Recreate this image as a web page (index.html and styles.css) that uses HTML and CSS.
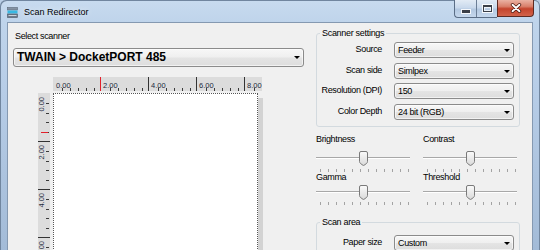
FILE: index.html
```html
<!DOCTYPE html>
<html lang="en">
<head>
  <meta charset="UTF-8">
  <title>Scan Redirector</title>
  <link rel="stylesheet" href="styles.css">
</head>
<body>
  <div class="window">
    <!-- title bar -->
    <div class="titlebar">
      <svg class="app-icon" width="11" height="11" viewBox="0 0 11 11">
        <rect x="0.5" y="0.5" width="10" height="2.5" fill="#8593a3" stroke="#5b6878" stroke-width="0.6"/>
        <rect x="0.5" y="3.5" width="10" height="3" fill="#38b8e2"/>
        <rect x="0.5" y="7" width="10" height="3.5" fill="#6c7a8a" stroke="#4b5867" stroke-width="0.6"/>
        <rect x="1.5" y="8" width="8" height="1" fill="#c9d2dc"/>
      </svg>
      <span class="title">Scan Redirector</span>
      <div class="caption-btns">
        <div class="cap-group">
          <div class="cap-btn min"><span class="min-glyph"></span></div>
          <div class="cap-btn max"><span class="max-glyph"></span></div>
        </div>
        <div class="cap-btn close">
          <svg width="12" height="10" viewBox="0 0 12 10">
            <path d="M2.5 1.8 L9.5 8.2 M9.5 1.8 L2.5 8.2" stroke="#4a1810" stroke-width="3.4" stroke-linecap="round"/>
            <path d="M2.5 1.8 L9.5 8.2 M9.5 1.8 L2.5 8.2" stroke="#ffffff" stroke-width="1.9" stroke-linecap="round"/>
          </svg>
        </div>
      </div>
    </div>

    <!-- client area -->
    <div class="client">
      <div class="left-col">
        <div class="field-label">Select scanner</div>
        <div class="combo combo-big">TWAIN &gt; DocketPORT 485<span class="arrow"></span></div>

        <div class="preview">
          <div class="ruler-top">
            <div class="seg first"><span>0.00</span></div>
            <div class="seg cursor"><span>2.00</span></div>
            <div class="seg"><span>4.00</span></div>
            <div class="seg"><span>6.00</span></div>
            <div class="seg last"><span>8.00</span></div>
          </div>
          <div class="preview-body">
            <div class="ruler-left">
              <div class="vseg first"><span>0.00</span></div>
              <div class="vseg"><span>2.00</span></div>
              <div class="vseg"><span>4.00</span></div>
              <div class="vseg"><span>6.00</span></div>
              <div class="cursor-mark"></div>
            </div>
            <div class="page"></div>
          </div>
        </div>
      </div>

      <div class="right-col">
        <fieldset class="group">
          <legend>Scanner settings</legend>
          <div class="form-grid">
            <label>Source</label>
            <div class="combo">Feeder<span class="arrow"></span></div>
            <label>Scan side</label>
            <div class="combo">Simlpex<span class="arrow"></span></div>
            <label>Resolution (DPI)</label>
            <div class="combo">150<span class="arrow"></span></div>
            <label>Color Depth</label>
            <div class="combo">24 bit (RGB)<span class="arrow"></span></div>
          </div>
        </fieldset>

        <div class="sliders">
          <div class="slider">
            <div class="slider-label">Brightness</div>
            <div class="track"><svg class="thumb" width="9" height="15" viewBox="0 0 9 15"><path d="M0.5 2 Q0.5 0.5 2 0.5 H7 Q8.5 0.5 8.5 2 V10.5 Q8.5 11.5 7.5 12.5 L5 14.3 Q4.5 14.6 4 14.3 L1.5 12.5 Q0.5 11.5 0.5 10.5 Z" fill="url(#tg)" stroke="#7a7a7a"/><defs><linearGradient id="tg" x1="0" y1="0" x2="0" y2="1"><stop offset="0" stop-color="#fbfbfb"/><stop offset="1" stop-color="#d9d9d9"/></linearGradient></defs></svg></div>
            <div class="ticks"></div>
          </div>
          <div class="slider">
            <div class="slider-label">Contrast</div>
            <div class="track"><svg class="thumb" width="9" height="15" viewBox="0 0 9 15"><path d="M0.5 2 Q0.5 0.5 2 0.5 H7 Q8.5 0.5 8.5 2 V10.5 Q8.5 11.5 7.5 12.5 L5 14.3 Q4.5 14.6 4 14.3 L1.5 12.5 Q0.5 11.5 0.5 10.5 Z" fill="url(#tg)" stroke="#7a7a7a"/></svg></div>
            <div class="ticks"></div>
          </div>
          <div class="slider second">
            <div class="slider-label">Gamma</div>
            <div class="track"><svg class="thumb" width="9" height="15" viewBox="0 0 9 15"><path d="M0.5 2 Q0.5 0.5 2 0.5 H7 Q8.5 0.5 8.5 2 V10.5 Q8.5 11.5 7.5 12.5 L5 14.3 Q4.5 14.6 4 14.3 L1.5 12.5 Q0.5 11.5 0.5 10.5 Z" fill="url(#tg)" stroke="#7a7a7a"/></svg></div>
            <div class="ticks"></div>
          </div>
          <div class="slider second">
            <div class="slider-label">Threshold</div>
            <div class="track"><svg class="thumb" width="9" height="15" viewBox="0 0 9 15"><path d="M0.5 2 Q0.5 0.5 2 0.5 H7 Q8.5 0.5 8.5 2 V10.5 Q8.5 11.5 7.5 12.5 L5 14.3 Q4.5 14.6 4 14.3 L1.5 12.5 Q0.5 11.5 0.5 10.5 Z" fill="url(#tg)" stroke="#7a7a7a"/></svg></div>
            <div class="ticks"></div>
          </div>
        </div>

        <fieldset class="group scan-area">
          <legend>Scan area</legend>
          <div class="form-grid">
            <label>Paper size</label>
            <div class="combo">Custom<span class="arrow"></span></div>
          </div>
        </fieldset>
      </div>
    </div>
  </div>
</body>
</html>
```

FILE: styles.css
```css
* {
  box-sizing: border-box;
}

body {
  margin: 0;
  font-family: "Liberation Sans", Arial, sans-serif;
  font-size: 9px;
  color: #000;
  background: #b9cee6;
}

/* window frame */
.window {
  width: 540px;
  height: 250px;
  overflow: hidden;
  display: flex;
  flex-direction: column;
  padding: 0 7px;
  border-radius: 6px 6px 0 0;
  background: linear-gradient(to bottom, #c8dbef 0px, #bfd4eb 22px, #b7cde7 90px, #a3bbd7 250px);
  box-shadow: inset 1px 1px 0 #71869f, inset -1px 0 0 #71869f;
}

.titlebar {
  height: 22px;
  flex: none;
  display: flex;
  align-items: flex-start;
}

.app-icon {
  margin-top: 7px;
}

.title {
  margin-left: 6px;
  margin-top: 6.5px;
  line-height: 11px;
  font-size: 9px;
  color: #000;
  text-shadow: 0 0 6px rgba(255, 255, 255, 0.9);
}

.caption-btns {
  margin-left: auto;
  margin-right: -1px;
  display: flex;
}

.cap-group {
  display: flex;
  border: 1px solid #5a6d85;
  border-top: none;
  border-right: none;
  border-radius: 0 0 0 4px;
  overflow: hidden;
  background: linear-gradient(to bottom, #e2ebf5 0%, #c9d9ec 45%, #b3c8e1 55%, #c6d8ed 100%);
}

.cap-btn {
  height: 17px;
  display: flex;
  align-items: center;
  justify-content: center;
}

.cap-btn.min {
  width: 22px;
  border-right: 1px solid #6b7e96;
}

.cap-btn.max {
  width: 20px;
}

.min-glyph {
  width: 8px;
  height: 3px;
  margin-top: 5px;
  background: #3a3f48;
  box-shadow: 0 0 0 1px rgba(255, 255, 255, 0.85);
}

.max-glyph {
  width: 9px;
  height: 7px;
  border: 1px solid #3a3f48;
  border-top-width: 2px;
  box-shadow: 0 0 0 1px rgba(255, 255, 255, 0.85), inset 0 0 0 1px rgba(255, 255, 255, 0.7);
}

.cap-btn.close {
  width: 37px;
  border: 1px solid #5e2a22;
  border-top: none;
  border-radius: 0 0 4px 0;
  background: linear-gradient(to bottom, #eab2a3 0%, #d9806b 40%, #c4442d 55%, #d2634a 100%);
}

/* client area */
.client {
  flex: 1;
  min-height: 0;
  display: flex;
  background: #f0f0f0;
  border: 1px solid #8599b1;
  border-bottom: none;
}

.left-col {
  width: 296px;
  flex: none;
  padding: 8px 0 0 5px;
}

.field-label {
  margin-left: 2px;
  line-height: 11px;
  letter-spacing: -0.35px;
}

.combo {
  position: relative;
  height: 16px;
  line-height: 14px;
  padding-left: 3px;
  border: 1px solid #8b8b8b;
  border-radius: 3px;
  letter-spacing: -0.35px;
  background: linear-gradient(to bottom, #f7f7f7 0%, #efefef 48%, #e4e4e4 52%, #dddddd 100%);
  box-shadow: inset 0 0 0 1px rgba(255, 255, 255, 0.6);
}

.combo .arrow {
  position: absolute;
  right: 3px;
  top: 6px;
  width: 0;
  height: 0;
  border-left: 3px solid transparent;
  border-right: 3px solid transparent;
  border-top: 3px solid #000;
}

.combo-big {
  margin-top: 6px;
  width: 291px;
  height: 19px;
  line-height: 17px;
  padding-left: 3px;
  font-size: 12px;
  font-weight: bold;
  letter-spacing: 0;
}

.combo-big .arrow {
  top: 7px;
}

/* preview with rulers */
.preview {
  margin-top: 10px;
  margin-left: 25px;
}

.ruler-top {
  margin-left: 15px;
  width: 209px;
  height: 14px;
  margin-bottom: 2px;
  display: flex;
  background-color: #dcdcdc;
}

.seg {
  width: 48px;
  flex: none;
  border-left: 1px solid #333;
  background-image: repeating-linear-gradient(to right, #3a3a3a 0 1px, transparent 1px 8px);
  background-repeat: no-repeat;
  background-position: 9px 100%;
  background-size: 33px 3px;
}

.seg.first {
  width: 47px;
  border-left: none;
}

.seg.cursor {
  border-left-color: #e3202b;
}

.seg.last {
  flex: 1;
  width: auto;
}

.seg span {
  display: block;
  margin-top: 4px;
  padding-left: 2px;
  font-size: 7.5px;
  line-height: 9px;
  color: #1c2a3c;
}

.seg.first span {
  padding-left: 3px;
}

.preview-body {
  display: flex;
  height: 200px;
}

.ruler-left {
  position: relative;
  width: 12px;
  flex: none;
  background-color: #dcdcdc;
}

.vseg {
  height: 48px;
  border-top: 1px solid #333;
  background-image: repeating-linear-gradient(to bottom, #3a3a3a 0 1px, transparent 1px 9.6px);
  background-repeat: no-repeat;
  background-position: right 1px top 8.6px;
  background-size: 3px 38.4px;
}

.vseg.first {
  border-top-color: transparent;
}

.vseg span {
  display: block;
  margin-top: 3px;
  width: 8px;
  writing-mode: vertical-rl;
  transform: rotate(180deg);
  font-size: 7.5px;
  line-height: 8px;
  color: #1c2a3c;
}

.cursor-mark {
  position: absolute;
  left: 3px;
  top: 39px;
  width: 7px;
  height: 1px;
  background: #e3202b;
}

.page {
  margin-left: 3px;
  width: 205px;
  height: 260px;
  background: #fff;
  border: 1px dotted #555;
  box-shadow: 5px 5px 0 #d3d3d3;
}

/* right column */
.right-col {
  width: 204px;
  flex: none;
  margin-left: 12px;
  padding-top: 5px;
}

.group {
  margin: 0;
  min-inline-size: 0;
  padding: 3px 5px 6px 0;
  border: 1px solid #d3dadf;
  border-radius: 3px;
}

.group legend {
  margin-left: 3px;
  padding: 0 2px;
  line-height: 11px;
  letter-spacing: -0.3px;
}

.form-grid {
  display: grid;
  grid-template-columns: 65px 120px;
  grid-auto-rows: 16px;
  column-gap: 12px;
  row-gap: 4.5px;
}

.form-grid label {
  text-align: right;
  line-height: 15px;
  letter-spacing: -0.35px;
  white-space: nowrap;
}

.sliders {
  margin-top: 7px;
  display: grid;
  grid-template-columns: 94px 94px;
  column-gap: 13px;
}

.slider-label {
  line-height: 11px;
  letter-spacing: -0.35px;
}

.track {
  margin-top: 6px;
  height: 15px;
  display: flex;
  justify-content: center;
  background: linear-gradient(to bottom, transparent 6px, #a8a8a8 6px 7px, #ffffff 7px 8px, transparent 8px);
}

.thumb {
  display: block;
}

.ticks {
  margin-top: 3px;
  height: 3px;
  background-image: repeating-linear-gradient(to right, #a3a3a3 0 1px, transparent 1px 8px);
  background-repeat: no-repeat;
  background-position: 4px 0;
  background-size: 89px 3px;
}

.slider.second .track {
  margin-top: 2px;
}

.slider.second .ticks {
  margin-top: 2px;
}

.scan-area {
  margin-top: 12px;
  padding-top: 7px;
}
```
